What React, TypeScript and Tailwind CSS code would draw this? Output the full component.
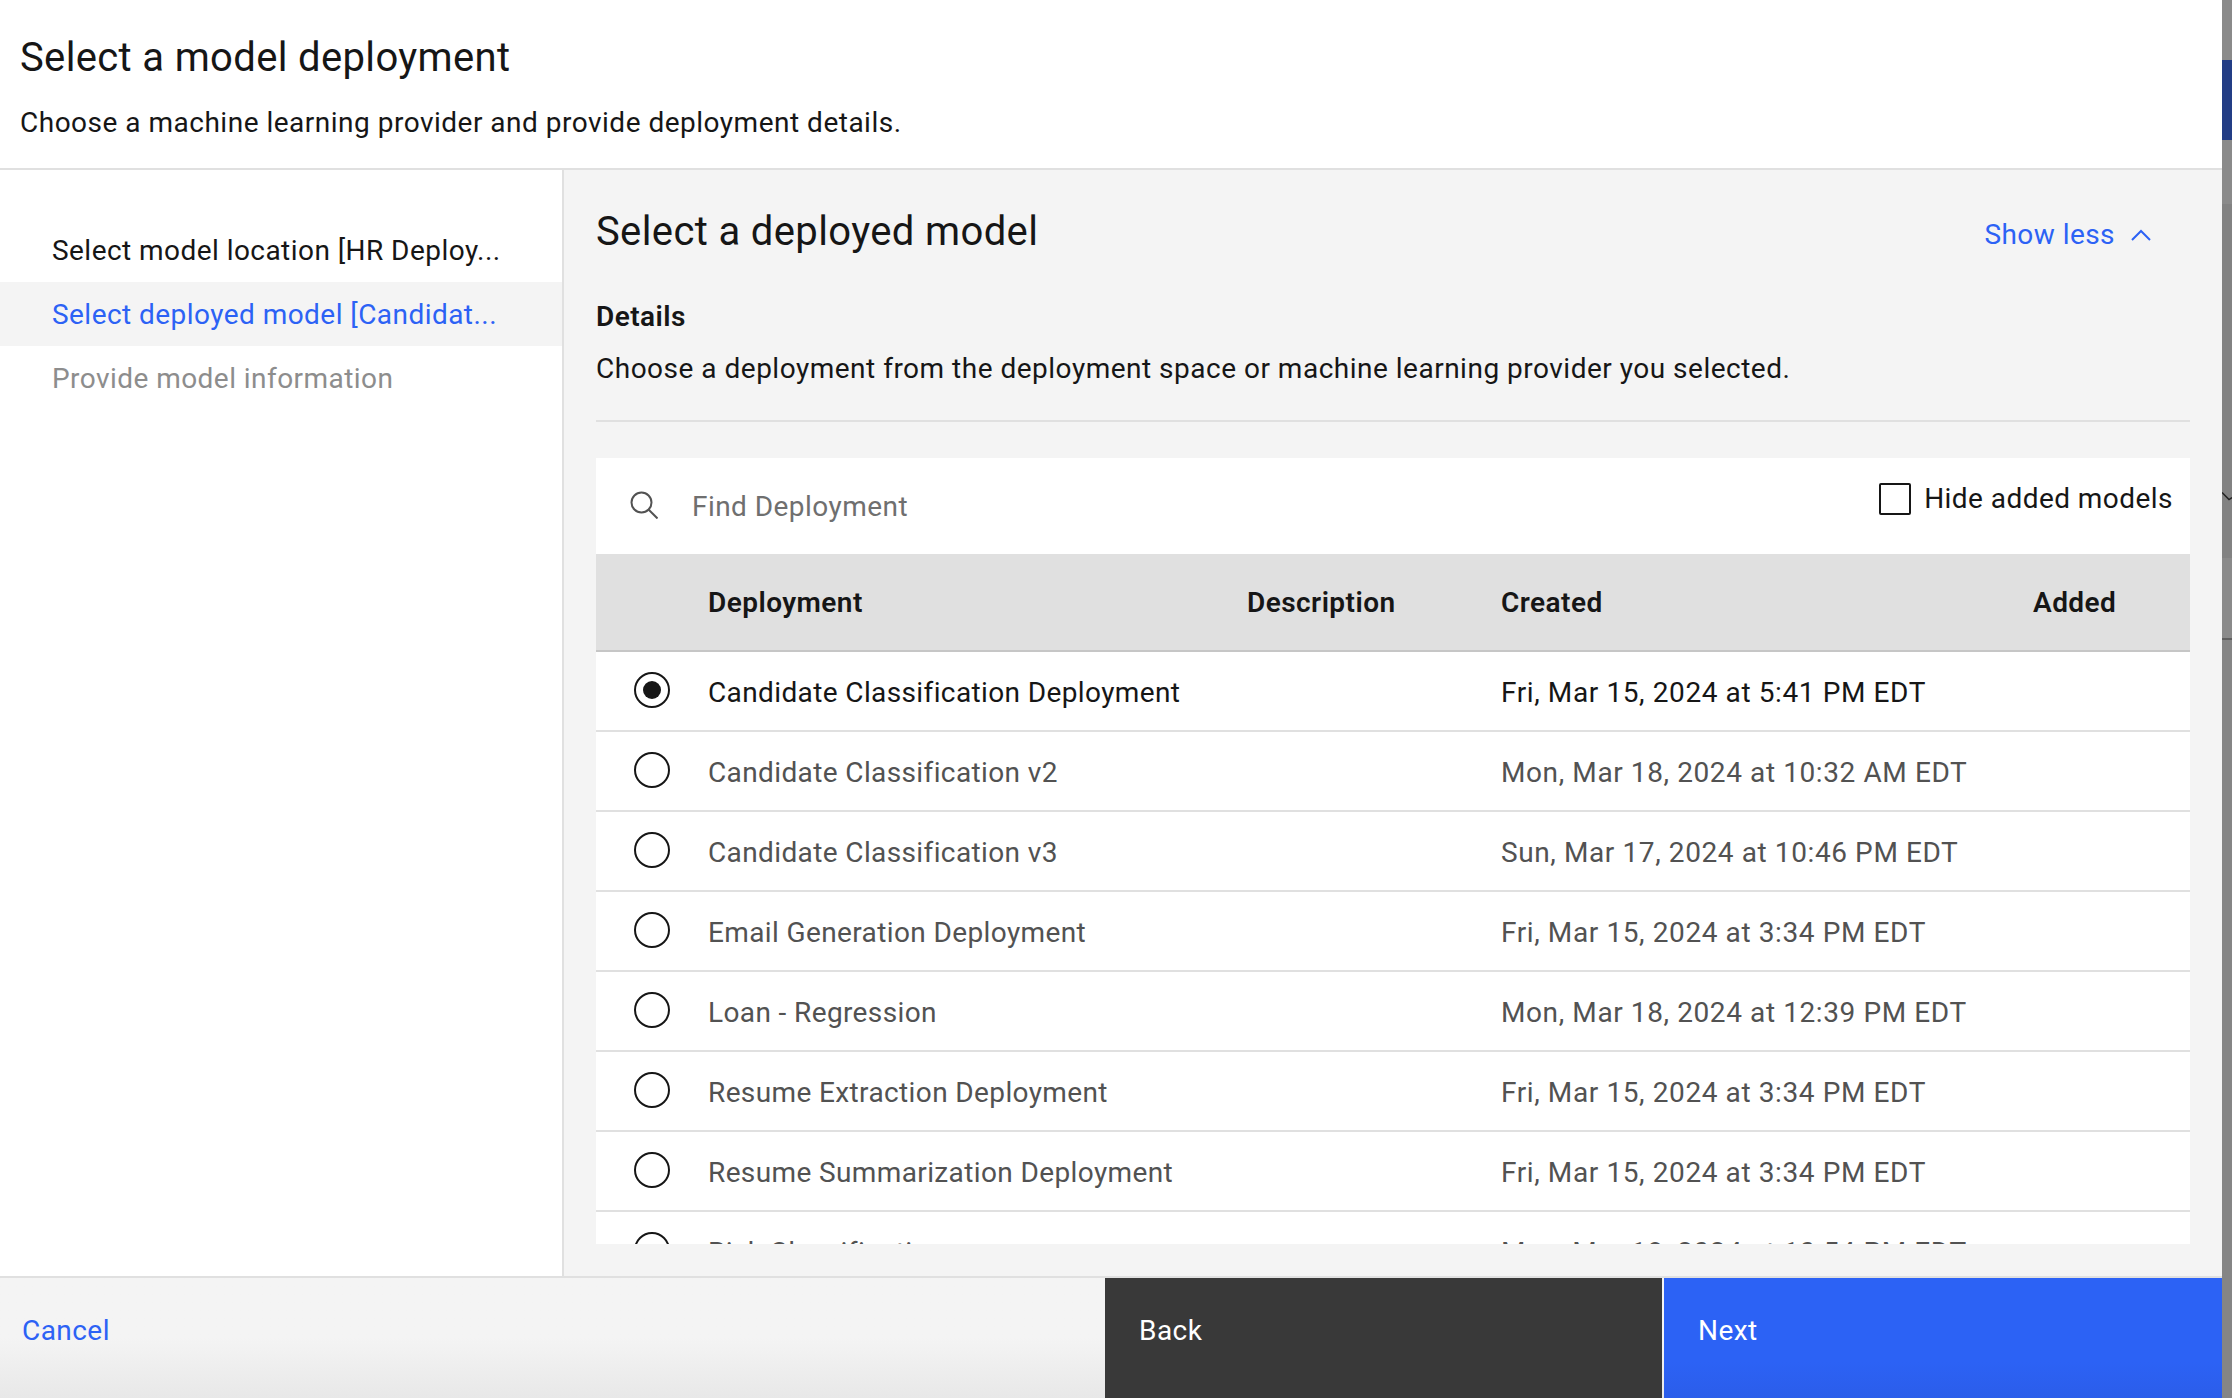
const FONT = "font-['Roboto',sans-serif]";

const rows = [
  { name: "Candidate Classification Deployment", created: "Fri, Mar 15, 2024 at 5:41 PM EDT", selected: true },
  { name: "Candidate Classification v2", created: "Mon, Mar 18, 2024 at 10:32 AM EDT" },
  { name: "Candidate Classification v3", created: "Sun, Mar 17, 2024 at 10:46 PM EDT" },
  { name: "Email Generation Deployment", created: "Fri, Mar 15, 2024 at 3:34 PM EDT" },
  { name: "Loan - Regression", created: "Mon, Mar 18, 2024 at 12:39 PM EDT" },
  { name: "Resume Extraction Deployment", created: "Fri, Mar 15, 2024 at 3:34 PM EDT" },
  { name: "Resume Summarization Deployment", created: "Fri, Mar 15, 2024 at 3:34 PM EDT" },
  { name: "Risk Classification", created: "Mon, Mar 18, 2024 at 10:54 PM EDT" },
];

function Radio({ selected }: { selected?: boolean }) {
  return (
    <div className="w-[36px] h-[36px] rounded-full border-2 border-[#161616] flex items-center justify-center">
      {selected && <div className="w-[18px] h-[18px] rounded-full bg-[#161616]" />}
    </div>
  );
}

function Row({ name, created, selected }: { name: string; created: string; selected?: boolean }) {
  const color = selected ? "text-[#161616]" : "text-[#525252]";
  return (
    <div className={`grid grid-cols-[112px_793px_1fr] h-[80px] shrink-0 border-b-2 border-[#e0e0e0] items-center ${color}`}>
      <div className="pl-[38px] -mt-[3px]">
        <Radio selected={selected} />
      </div>
      <span className="pt-[3px] tracking-[0.38px]">{name}</span>
      <span className="pt-[3px] tracking-[0.6px]">{created}</span>
    </div>
  );
}

export default function App() {
  return (
    <div className={`w-[2232px] h-[1398px] flex overflow-hidden bg-white text-[28px] leading-[36px] tracking-[0.45px] text-[#161616] ${FONT}`}>
      <div className="w-[2222px] flex flex-col">
        <header className="h-[170px] shrink-0 border-b-2 border-[#e0e0e0] pl-[20px] pt-[34px]">
          <h1 className="text-[40px] leading-[48px] tracking-[0.35px]">Select a model deployment</h1>
          <p className="mt-[23px] tracking-[0.5px]">Choose a machine learning provider and provide deployment details.</p>
        </header>

        <div className="flex h-[1108px] shrink-0 border-b-2 border-[#e0e0e0]">
          <nav className="w-[564px] shrink-0 border-r-2 border-[#e0e0e0] pt-[48px]">
            <div className="h-[64px] pl-[52px] pt-[2px] flex items-center">Select model location [HR Deploy...</div>
            <div className="h-[64px] pl-[52px] pt-[2px] flex items-center bg-[#f4f4f4] text-[#2c62f5]">Select deployed model [Candidat...</div>
            <div className="h-[64px] pl-[52px] pt-[2px] flex items-center text-[#8d8d8d]">Provide model information</div>
          </nav>

          <main className="flex-1 bg-[#f4f4f4] pl-[32px] pr-[32px]">
            <div className="flex items-center justify-between h-[122px] pt-[2px]">
              <h2 className="text-[40px] leading-[48px] tracking-[0.37px]">Select a deployed model</h2>
              <button className="flex items-center gap-[14px] pr-[37px] pt-[6px] text-[#2c62f5]">
                Show less
                <svg width="24" height="14" viewBox="0 0 24 14" fill="none" stroke="#2c62f5" strokeWidth="2">
                  <path d="M3 12L12 3l9 9" />
                </svg>
              </button>
            </div>
            <div className="font-semibold mt-[7px]">Details</div>
            <p className="mt-[16px] tracking-[0.5px]">Choose a deployment from the deployment space or machine learning provider you selected.</p>
            <div className="h-[2px] bg-[#e0e0e0] mt-[33px]" />

            <div className="mt-[36px] h-[786px] bg-white overflow-hidden flex flex-col">
              <div className="h-[96px] shrink-0 flex items-center pl-[34px] pr-[17px]">
                <svg width="28" height="28" viewBox="0 0 28 28" fill="none" stroke="#525252" strokeWidth="2" className="-mt-[2px]">
                  <circle cx="11.5" cy="11.5" r="10" />
                  <path d="M18.5 18.5L27.5 27.5" />
                </svg>
                <span className="ml-[34px] pt-[2px] text-[#6f6f6f]">Find Deployment</span>
                <label className="ml-auto flex items-center gap-[13px] -mt-[14px]">
                  <span className="w-[32px] h-[32px] border-2 border-[#161616] rounded-[2px]" />
                  Hide added models
                </label>
              </div>
              <div className="grid grid-cols-[112px_539px_254px_532px_1fr] h-[98px] shrink-0 items-center bg-[#e0e0e0] border-b-2 border-[#c6c6c6] font-semibold pt-[2px]">
                <span />
                <span>Deployment</span>
                <span>Description</span>
                <span>Created</span>
                <span>Added</span>
              </div>
              {rows.map((r) => (
                <Row key={r.name} {...r} />
              ))}
            </div>
          </main>
        </div>

        <footer className="h-[120px] shrink-0 flex bg-gradient-to-b from-[#f4f4f4] from-50% to-[#e8e8e8]">
          <div className="w-[1105px] pl-[22px] pb-[14px] flex items-center text-[#2c62f5]">Cancel</div>
          <div className="w-[557px] mr-[2px] pl-[34px] pb-[14px] flex items-center bg-[#393939] text-white">Back</div>
          <div className="flex-1 pl-[34px] pb-[14px] flex items-center bg-gradient-to-b from-[#2c62f5] from-70% to-[#2b5dea] text-white">Next</div>
        </footer>
      </div>

      <div className="w-[10px] shrink-0 flex flex-col bg-[#858585]">
        <div className="h-[60px] shrink-0 bg-[#8a8a8a]" />
        <div className="h-[80px] shrink-0 bg-[#233d85]" />
        <div className="h-[64px] shrink-0 bg-[#8a8a8a]" />
        <div className="h-[354px] shrink-0 bg-[#828282] pt-[288px]">
          <svg width="10" height="10" viewBox="0 0 10 10" fill="none" stroke="#222222" strokeWidth="1.5" className="block">
            <path d="M0 0.5L7 7.5L10 5.5" />
          </svg>
        </div>
        <div className="h-[80px] shrink-0 bg-[#8a8a8a]" />
        <div className="h-[2px] shrink-0 bg-[#5f5f5f]" />
      </div>
    </div>
  );
}
